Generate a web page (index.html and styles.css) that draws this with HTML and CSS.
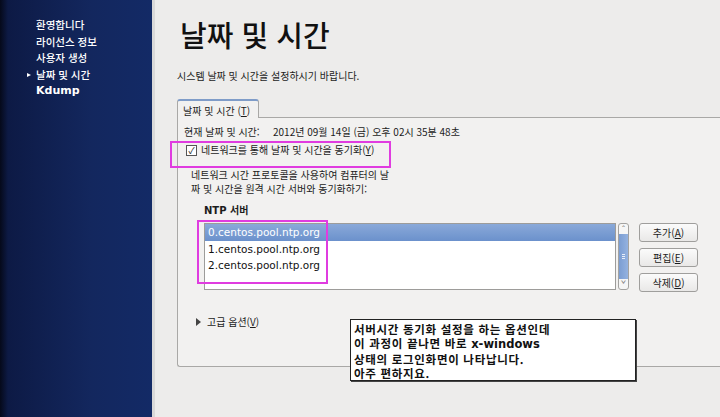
FILE: index.html
```html
<!DOCTYPE html>
<html lang="ko">
<head>
  <meta charset="UTF-8" />
  <title>날짜 및 시간</title>
  <link rel="stylesheet" href="styles.css">
</head>
<body>

  <div class="sidebar">
    <ul class="steps">
      <li>환영합니다</li>
      <li>라이선스 정보</li>
      <li>사용자 생성</li>
      <li class="current">날짜 및 시간</li>
      <li class="bold">Kdump</li>
    </ul>
  </div>

  <div class="main">
    <h1>날짜 및 시간</h1>
    <p class="intro">시스템 날짜 및 시간을 설정하시기 바랍니다.</p>

    <div class="tabs">
      <div class="tab">날짜 및 시간 (<u>T</u>)</div>
    </div>

    <div class="panel">
      <div class="row-now">
        <span class="label">현재 날짜 및 시간:</span>
        <span>2012년 09월 14일 (금) 오후 02시 35분 48초</span>
      </div>

      <label class="check">
        <span class="box">&#10003;</span>
        네트워크를 통해 날짜 및 시간을 동기화(<u>Y</u>)
      </label>

      <p class="desc">네트워크 시간 프로토콜을 사용하여 컴퓨터의 날<br>짜 및 시간을 원격 시간 서버와 동기화하기:</p>

      <div class="ntp">
        <div class="ntp-title">NTP 서버</div>
        <div class="ntp-body">
          <div class="list">
            <div class="item selected">0.centos.pool.ntp.org</div>
            <div class="item">1.centos.pool.ntp.org</div>
            <div class="item">2.centos.pool.ntp.org</div>
          </div>
          <div class="scroll">
            <span class="arrow">&#710;</span>
            <span class="thumb"><i></i><i></i><i></i></span>
            <span class="arrow">&#711;</span>
          </div>
          <div class="buttons">
            <button>추가(<u>A</u>)</button>
            <button>편집(<u>E</u>)</button>
            <button>삭제(<u>D</u>)</button>
          </div>
        </div>
      </div>

      <div class="advanced"><span class="tri"></span>고급 옵션(<u>V</u>)</div>
    </div>

    <div class="mark mark-check"></div>
    <div class="mark mark-list"></div>

    <div class="note">
      서버시간 동기화 설정을 하는 옵션인데<br>
      이 과정이 끝나면 바로 <b>x-windows</b><br>
      상태의 로그인화면이 나타납니다.<br>
      아주 편하지요.
    </div>
  </div>

</body>
</html>
```

FILE: styles.css
```css
body {
  margin: 0;
  display: flex;
  height: 417px;
  overflow: hidden;
  font-family: "Noto Sans CJK KR", "DejaVu Sans", sans-serif;
  font-size: 10px;
  color: #1c1c1c;
  background: #edeceb;
}

.sidebar {
  width: 152px;
  flex: none;
  background: linear-gradient(90deg, #05091a 0, #0d1a45 8px, #13275e 60%, #132a66 100%);
  border-right: 3px solid #d9d9d9;
}

.steps {
  list-style: none;
  margin: 0;
  padding: 17px 0 0 36px;
  color: #fff;
  font-size: 10.5px;
  font-weight: 500;
}

.steps li {
  height: 16.5px;
  line-height: 16.5px;
  position: relative;
}

.steps li.current::before {
  content: "";
  position: absolute;
  left: -9px;
  top: 6px;
  border-left: 4px solid #fff;
  border-top: 2.5px solid transparent;
  border-bottom: 2.5px solid transparent;
}

.steps li.bold {
  font-family: "DejaVu Sans", sans-serif;
  font-weight: bold;
  font-size: 11px;
}

.main {
  flex: 1;
  position: relative;
  padding: 0 0 0 22px;
}

h1 {
  margin: 14px 0 0 3px;
  font-size: 29px;
  font-weight: 500;
  line-height: 40px;
  color: #111;
}

.intro {
  margin: 15px 0 0 0;
  line-height: 14px;
}

.tabs {
  margin-top: 16px;
  display: flex;
}

.tab {
  width: 82px;
  height: 19px;
  line-height: 19px;
  padding-left: 5px;
  box-sizing: border-box;
  background: #f2f1f0;
  border: 1px solid #a9a8a6;
  border-top: 2px solid #7f9cc8;
  border-bottom: none;
  border-radius: 3px 3px 0 0;
  margin-bottom: -1px;
}

.panel {
  height: 250px;
  margin-right: -4px;
  box-sizing: border-box;
  background: #f2f1f0;
  border: 1px solid #a9a8a6;
  border-right: none;
  border-radius: 0 0 0 3px;
  padding: 7px 0 0 6px;
}

.row-now {
  display: flex;
  line-height: 14px;
}

.row-now .label {
  width: 89px;
}

.check {
  display: flex;
  align-items: center;
  height: 14px;
  margin: 4px 0 0 2px;
  line-height: 14px;
}

.check .box {
  width: 9px;
  height: 9px;
  border: 1px solid #555;
  background: #fff;
  font-size: 9px;
  line-height: 9px;
  text-align: center;
  margin-right: 4px;
}

.desc {
  margin: 11px 0 0 7px;
  line-height: 14px;
}

.ntp {
  margin: 8px 0 0 20px;
}

.ntp-title {
  font-family: "DejaVu Sans", "Noto Sans CJK KR", sans-serif;
  font-weight: bold;
  line-height: 14px;
}

.ntp-body {
  display: flex;
  margin-top: 5px;
}

.list {
  width: 412px;
  height: 67px;
  background: #fff;
  border: 1px solid #9d9c9a;
  box-sizing: border-box;
  font-family: "DejaVu Sans", sans-serif;
  font-size: 10.5px;
}

.item {
  height: 16.5px;
  line-height: 16.5px;
  padding-left: 3px;
  color: #111;
}

.item.selected {
  color: #fff;
  background: linear-gradient(#8aa9d9, #6b91cc);
}

.scroll {
  width: 11px;
  height: 67px;
  margin-left: 2px;
  box-sizing: border-box;
  border: 1px solid #a3a2a0;
  border-radius: 3px;
  background: #f6f6f6;
  display: flex;
  flex-direction: column;
  align-items: center;
}

.scroll .arrow {
  height: 10px;
  font-size: 9px;
  line-height: 12px;
  color: #777;
}

.scroll .thumb {
  flex: 1;
  width: 9px;
  background: linear-gradient(90deg, #7b9dd2, #94b2e0);
  display: flex;
  flex-direction: column;
  justify-content: center;
  align-items: center;
  gap: 1px;
}

.scroll .thumb i {
  width: 3px;
  height: 1px;
  background: #e8eef8;
}

.buttons {
  display: flex;
  flex-direction: column;
  gap: 6px;
  margin-left: 10px;
}

.buttons button {
  width: 59px;
  height: 19px;
  padding: 0;
  font-family: inherit;
  font-size: 10px;
  color: #1c1c1c;
  border: 1px solid #9f9e9c;
  border-radius: 3px;
  background: linear-gradient(#fbfbfb, #e9e8e7);
}

.advanced {
  margin: 23px 0 0 12px;
  display: flex;
  align-items: center;
  line-height: 14px;
}

.tri {
  width: 0;
  height: 0;
  border-left: 5px solid #444;
  border-top: 4px solid transparent;
  border-bottom: 4px solid transparent;
  margin-right: 6px;
}

.mark {
  position: absolute;
  border: 2px solid #e03ce0;
}

.mark-check {
  left: 15px;
  top: 141px;
  width: 217px;
  height: 23px;
}

.mark-list {
  left: 42px;
  top: 220px;
  width: 127px;
  height: 60px;
}

.note {
  position: absolute;
  left: 195px;
  top: 319px;
  width: 281px;
  height: 58px;
  padding: 2px 0 0 3px;
  background: #fff;
  border: 1px solid #222;
  box-shadow: 1px 1px 0 #444;
  font-size: 11.5px;
  font-weight: bold;
  line-height: 14.3px;
  letter-spacing: 0.7px;
  color: #111;
}

.note b {
  font-family: "DejaVu Sans", sans-serif;
  letter-spacing: 0;
}
```
